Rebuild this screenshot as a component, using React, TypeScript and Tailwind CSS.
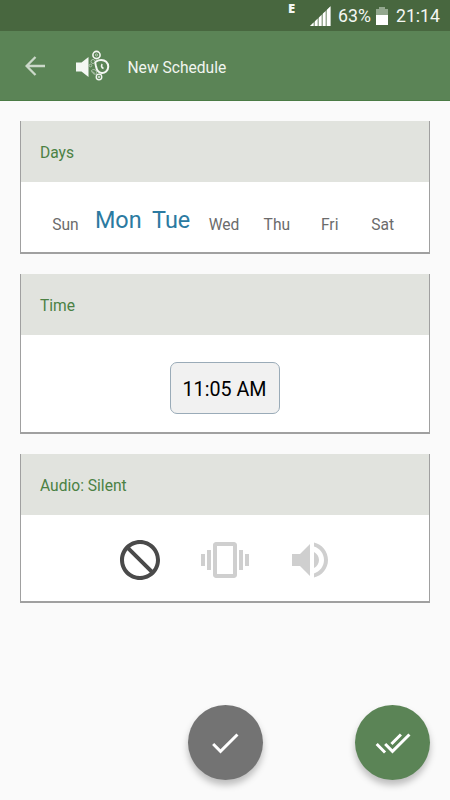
import type { ReactNode } from "react";
import clsx from "clsx";

const days = [
  { name: "Sun", selected: false },
  { name: "Mon", selected: true },
  { name: "Tue", selected: true },
  { name: "Wed", selected: false },
  { name: "Thu", selected: false },
  { name: "Fri", selected: false },
  { name: "Sat", selected: false },
];

/* Status bar */
function StatusBar() {
  return (
    <div className="flex h-[31px] items-center justify-end bg-[#48673f] pr-[10px] text-[#f4f7f3]">
      <span className="mr-[15px] mb-[15px] font-['Open_Sans'] text-[13px] leading-none font-extrabold">E</span>
      <svg width="21" height="20" viewBox="0 0 21 20" className="mr-[7px]" fill="#fff">
        <path d="M0 20 3.500 16.600V20ZM5 15.300 7.500 12.800V20H5ZM9 11.400 11.500 9V20H9ZM13 7.500 15.500 5.200V20H13ZM17 3.700 20.500 .3V20H17Z" />
        <path opacity=".45" d="M0 20 20.500 .3V20Z" />
      </svg>
      <span className="mr-[5px] pt-0.5 text-[17.700px] leading-none">63%</span>
      <svg width="12" height="18" viewBox="0 0 12 18" className="mr-[8px]">
        <path fill="#93a78e" d="M3 0h6v2h3v6H0V2h3Z" />
        <path fill="#fff" d="M0 8h12v10H0Z" />
      </svg>
      <span className="pt-0.5 text-[17.700px] leading-none">21:14</span>
    </div>
  );
}

function AppLogo() {
  return (
    <svg width="34" height="32" viewBox="0 0 34 32" fill="none" className="ml-[30px]" stroke="#f4f7f3">
      <path fill="#f4f7f3" stroke="none" d="M0 12.500h5.500L12.500 7v20L5.500 21.500H0Z" />
      <circle cx="20.500" cy="5" r="3.600" strokeWidth="1.600" />
      <circle cx="20.500" cy="5" r="1.100" strokeWidth=".8" opacity=".7" />
      <path strokeWidth="2" d="M20 11.500c3-2 7.500-2.200 10.200.3 2.900 2.800 2.600 7.300-.1 9.700-2.500 2.200-6.300 1.900-8.300-.6-1.700-2.100-1.500-4-2-5.600-.4-1.500-1.200-2.800.2-3.800Z" />
      <path strokeWidth="1.600" d="M26.300 14.200c-1.300 1.200-1 3.400 1.200 4.300" />
      <circle cx="23" cy="27" r="2.800" strokeWidth="1.300" />
      <circle cx="23" cy="27" r=".9" strokeWidth=".8" />
      <g strokeWidth="1" opacity=".55">
        <circle cx="17" cy="11.500" r="2" />
        <circle cx="14.500" cy="15.500" r="1.300" />
        <path d="M15.500 20.500c1.500-1.500 3.500-1 4.500.3 1 1.300.7 3-.4 3.400-1.800.5-3.800-1.500-4.100-3.700Z" />
        <path d="M16.500 21.500 19 23.500" />
      </g>
    </svg>
  );
}

/* Header */
function Header() {
  return (
    <header className="flex h-[70px] items-center border-b border-[#4b7b45] bg-[#5b8456] pl-[25px]">
      <svg width="21" height="20" viewBox="0 0 21 20" fill="none" stroke="#cbd8c9" strokeWidth="2.300">
        <path d="M20 10H2M10.500 1 1.600 10l8.900 9" />
      </svg>
      <AppLogo />
      <h1 className="ml-[17.500px] pt-[6px] text-[15.600px] leading-none text-[#f1f5f0]">New Schedule</h1>
    </header>
  );
}

function Card({ title, className, children }: { title: string; className: string; children: ReactNode }) {
  return (
    <section className={clsx("flex flex-col border-x border-b-2 border-[#a0a0a0] bg-white", className)}>
      <div className="flex h-[61px] shrink-0 items-center bg-[#e1e3de] pt-[5px] pl-[19px]">
        <h2 className="text-[15.600px] leading-none text-[#4b8144]">{title}</h2>
      </div>
      {children}
    </section>
  );
}

/* Icons are on the 24px material grid */
function Icon({ d, size, className }: { d: string; size: number; className?: string }) {
  return (
    <svg width={size} height={size} viewBox="0 0 24 24" fill="currentColor" className={className}>
      <path d={d} />
    </svg>
  );
}

const BLOCK =
  "M12 2C6.480 2 2 6.480 2 12s4.480 10 10 10 10-4.480 10-10S17.520 2 12 2zm0 18c-4.420 0-8-3.580-8-8 0-1.850.63-3.550 1.690-4.900L16.900 18.310C15.550 19.370 13.850 20 12 20zm6.310-3.100L7.100 5.690C8.450 4.630 10.150 4 12 4c4.420 0 8 3.580 8 8 0 1.850-.63 3.550-1.690 4.900z";
const VIBRATION =
  "M0 15h2V9H0v6zm3 2h2V7H3v10zm19-8v6h2V9h-2zm-3 8h2V7h-2v10zM16.500 3h-9C6.670 3 6 3.670 6 4.500v15c0 .83.67 1.500 1.500 1.500h9c.83 0 1.500-.67 1.500-1.500v-15c0-.83-.67-1.500-1.500-1.500zM16 19H8V5h8v14z";
const VOLUME =
  "M3 9v6h4l5 5V4L7 9H3zm13.500 3c0-1.770-1.020-3.290-2.500-4.030v8.050c1.480-.73 2.500-2.250 2.500-4.020zM14 3.230v2.060c2.890.86 5 3.540 5 6.710s-2.110 5.850-5 6.710v2.060c4.010-.91 7-4.490 7-8.770s-2.990-7.860-7-8.770z";
const DONE = "M9 16.200 4.800 12l-1.400 1.400L9 19 21 7l-1.400-1.400L9 16.200z";
const DONE_ALL =
  "M18 7l-1.410-1.410-6.340 6.340 1.410 1.410L18 7zm4.240-1.410L11.660 16.170 7.480 12l-1.410 1.410L11.660 19l12-12-1.420-1.410zM.41 13.410 6 19l1.410-1.410L1.830 12 .41 13.410z";

export default function App() {
  return (
    <div className="flex h-[800px] w-[450px] flex-col overflow-hidden bg-[#fafafa] font-[Roboto,sans-serif]">
      <StatusBar />
      <Header />

      <main className="flex flex-col px-5 pt-5">
        <Card title="Days" className="h-[133px]">
          <div className="grid grid-cols-7 items-baseline pr-[20px] pl-[18px] pt-[26px] text-center">
            {days.map((day) => (
              <span
                key={day.name}
                className={clsx(
                  "leading-[28px]",
                  day.selected ? "relative -top-[2px] text-[23.400px] text-[#2b7aa1]" : "text-[15.600px] text-[#6b6b6b]"
                )}
              >
                {day.name}
              </span>
            ))}
          </div>
        </Card>

        <Card title="Time" className="mt-5 h-[160px]">
          <div className="flex justify-center pt-[27px]">
            <button className="mr-px h-[52px] w-[110px] rounded-[7px] border border-[#9aabb8] bg-[#f1f1f1] pt-1 text-[19.700px] text-black">
              11:05 AM
            </button>
          </div>
        </Card>

        <Card title="Audio: Silent" className="mt-5 h-[149px]">
          <div className="flex justify-center gap-[37px] pt-[21px] text-[#cfcfcf]">
            <Icon d={BLOCK} size={48} className="text-[#4a4a4a]" />
            <Icon d={VIBRATION} size={48} />
            <Icon d={VOLUME} size={48} />
          </div>
        </Card>
      </main>

      {/* Floating buttons */}
      <footer className="mt-auto flex justify-end gap-[92.500px] pr-5 pb-5 text-white">
        <button className="flex size-[75px] items-center justify-center rounded-full bg-[#737373] shadow-[0_5px_7px_rgba(0,0,0,0.25)]">
          <Icon d={DONE} size={36} className="mr-px" />
        </button>
        <button className="flex size-[75px] items-center justify-center rounded-full bg-[#5b8456] shadow-[0_5px_7px_rgba(0,0,0,0.25)]">
          <Icon d={DONE_ALL} size={36} />
        </button>
      </footer>
    </div>
  );
}
